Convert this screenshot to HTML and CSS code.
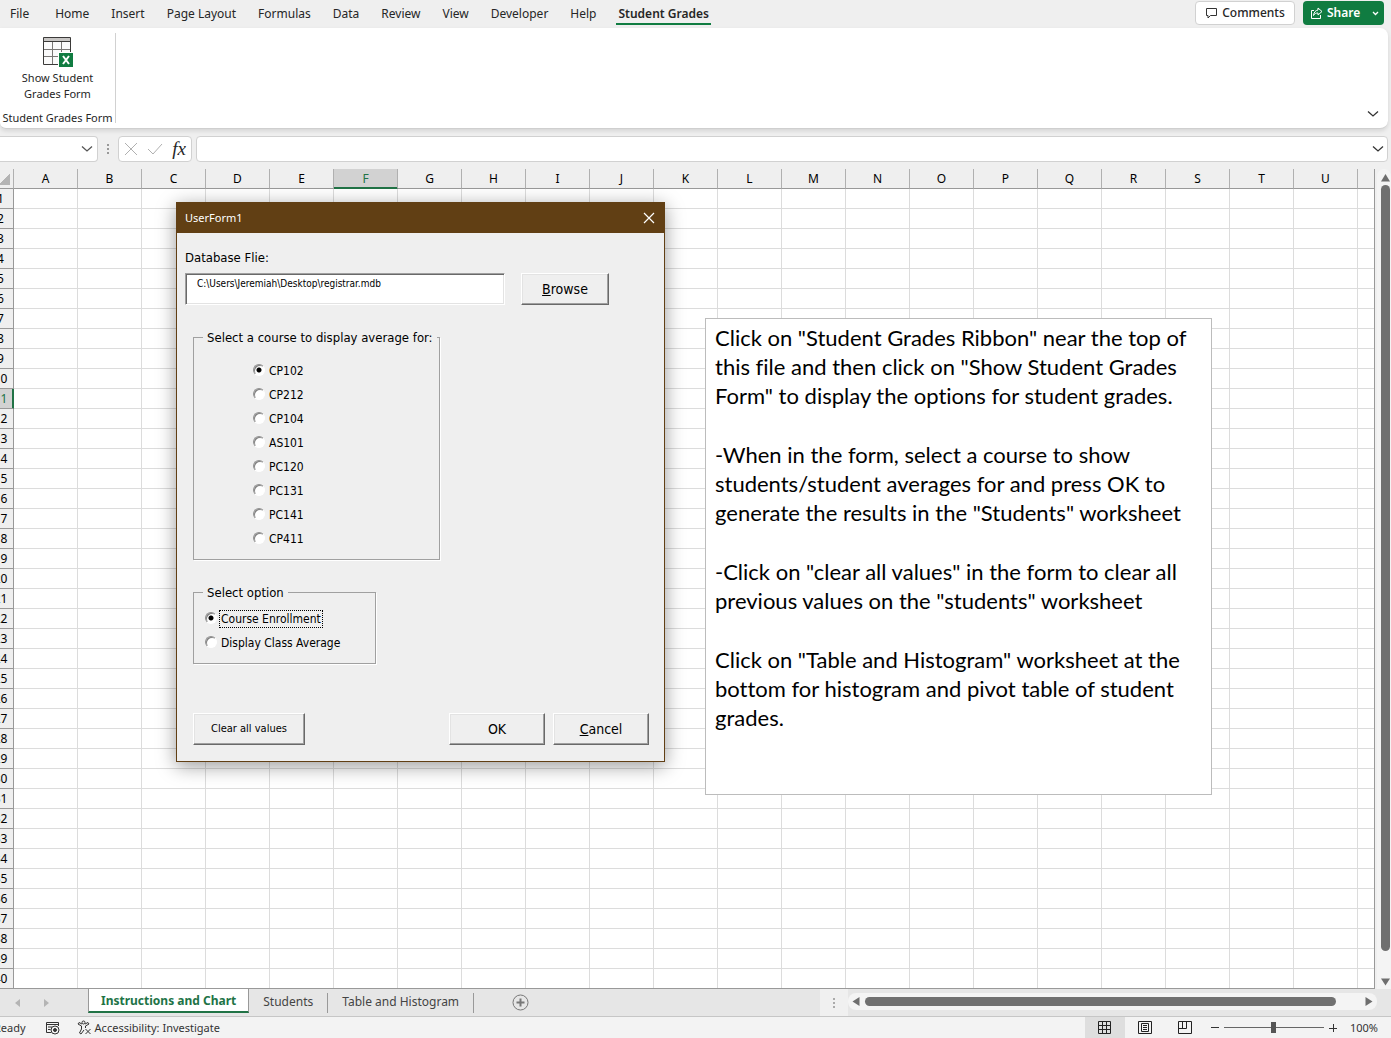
FILE: index.html
```html
<!DOCTYPE html>
<html lang="en">
<head>
<meta charset="utf-8">
<title>Student Grades</title>
<link rel="stylesheet" href="styles.css">
</head>
<body>
<header class="menu-bar">
  <nav class="menu">
    <a class="menu-item menu-file" href="#">File</a>
    <a class="menu-item" href="#">Home</a>
    <a class="menu-item" href="#">Insert</a>
    <a class="menu-item" href="#">Page Layout</a>
    <a class="menu-item" href="#">Formulas</a>
    <a class="menu-item" href="#">Data</a>
    <a class="menu-item" href="#">Review</a>
    <a class="menu-item" href="#">View</a>
    <a class="menu-item" href="#">Developer</a>
    <a class="menu-item" href="#">Help</a>
    <a class="menu-item is-active" href="#">Student Grades</a>
  </nav>
  <button class="top-button comments" type="button">
    <svg width="13" height="13" viewBox="0 0 13 13" fill="none" stroke="#333"><path d="M1.500 1.500h10v7h-6l-2.500 2.500v-2.500h-1.500z"/></svg>
    Comments
  </button>
  <button class="top-button share" type="button">
    <svg width="13" height="13" viewBox="0 0 13 13" fill="none" stroke="#fff"><path d="M4 3.500H1.500v8h9V8"/><path d="M8 1l4 3.500-4 3.500V6C6 6 4.500 6.500 3.500 8.500 4 5 5.500 3.500 8 3z"/></svg>
    <span>Share</span>
    <svg class="share-caret" width="7" height="5" viewBox="0 0 7 5" fill="none" stroke="#fff" stroke-width="1.300"><path d="M1 1l2.500 2.500L6 1"/></svg>
  </button>
</header>

<section class="ribbon">
  <div class="ribbon-group">
    <button class="ribbon-button" type="button">
      <svg width="32" height="32" viewBox="0 0 32 32"><path d="M2.500 2.500h27v27h-27z" fill="#fafafa"/><path d="M2.500 2.500h27v4h-27z" fill="#c8c6c4"/><path d="M11.500 7v22M20.500 7v22M3 14.500h26M3 21.500h26" stroke="#797775" fill="none"/><path d="M2.500 2.500h27v27h-27zM2.500 6.500h27" stroke="#3b3a39" fill="none"/><path d="M17 17h15v15H17z" fill="#fff"/><path d="M18 18h14v14H18z" fill="#107c41"/><path d="M22 21l6 8M28 21l-6 8" stroke="#fff" stroke-width="2"/></svg>
      <span>Show Student<br>Grades Form</span>
    </button>
    <div class="ribbon-label">Student Grades Form</div>
  </div>
  <button class="icon-button ribbon-collapse" type="button" aria-label="Collapse ribbon">
    <svg width="12" height="8" viewBox="0 0 12 8" fill="none" stroke="#333" stroke-width="1.300"><path d="M1 1.500l5 4.500 5-4.500"/></svg>
  </button>
</section>

<section class="formula-row">
  <button class="name-box" type="button" aria-label="Name box">
    <svg width="12" height="8" viewBox="0 0 12 8" fill="none" stroke="#555" stroke-width="1.300"><path d="M1 1.500l5 4.500 5-4.500"/></svg>
  </button>
  <svg width="4" height="12" viewBox="0 0 4 12" fill="#999"><path d="M1 1h2v2H1zM1 5h2v2H1zM1 9h2v2H1z"/></svg>
  <div class="formula-tools">
    <button class="icon-button" type="button" aria-label="Cancel entry"><svg width="14" height="14" viewBox="0 0 14 14" stroke="#b0b0b0"><path d="M1 1l12 12M13 1L1 13"/></svg></button>
    <button class="icon-button" type="button" aria-label="Enter"><svg width="16" height="14" viewBox="0 0 16 14" fill="none" stroke="#b0b0b0"><path d="M1 7l5 5L15 2"/></svg></button>
    <button class="icon-button fx" type="button">fx</button>
  </div>
  <div class="formula-box">
    <input class="formula-input" type="text" aria-label="Formula">
    <svg width="12" height="8" viewBox="0 0 12 8" fill="none" stroke="#333" stroke-width="1.300"><path d="M1 1.500l5 4.500 5-4.500"/></svg>
  </div>
</section>

<main class="workspace">
  <div class="sheet">
    <table class="grid" id="grid" aria-label="Worksheet"></table>
  </div>
  <div class="v-scroll">
    <svg width="9" height="8" viewBox="0 0 9 8" fill="#6e6e6e"><path d="M4.500 0L9 7.500H0z"/></svg>
    <div class="v-thumb"></div>
    <svg width="9" height="8" viewBox="0 0 9 8" fill="#6e6e6e"><path d="M4.500 7.500L9 .5H0z"/></svg>
  </div>

  <form class="dialog" onsubmit="return false">
    <div class="dialog-title">
      <span>UserForm1</span>
      <button class="icon-button" type="button" aria-label="Close"><svg width="12" height="12" viewBox="0 0 12 12" stroke="#fff" stroke-width="1.200"><path d="M1 1l10 10M11 1L1 11"/></svg></button>
    </div>
    <div class="dialog-body">
      <label class="file-label" for="db">Database Flie:</label>
      <div class="file-row">
        <input class="file-input" id="db" type="text" value="C:\Users\Jeremiah\Desktop\registrar.mdb">
        <button class="button browse" type="button"><u>B</u>rowse</button>
      </div>
      <fieldset class="frame courses">
        <legend>Select a course to display average for:</legend>
        <label class="option"><input type="radio" name="course" checked><span>CP102</span></label>
        <label class="option"><input type="radio" name="course"><span>CP212</span></label>
        <label class="option"><input type="radio" name="course"><span>CP104</span></label>
        <label class="option"><input type="radio" name="course"><span>AS101</span></label>
        <label class="option"><input type="radio" name="course"><span>PC120</span></label>
        <label class="option"><input type="radio" name="course"><span>PC131</span></label>
        <label class="option"><input type="radio" name="course"><span>PC141</span></label>
        <label class="option"><input type="radio" name="course"><span>CP411</span></label>
      </fieldset>
      <fieldset class="frame modes">
        <legend>Select option</legend>
        <label class="option"><input type="radio" name="mode" checked><span class="focused">Course Enrollment</span></label>
        <label class="option"><input type="radio" name="mode"><span>Display Class Average</span></label>
      </fieldset>
      <div class="actions">
        <button class="button clear" type="button">Clear all values</button>
        <button class="button action" type="submit">OK</button>
        <button class="button action" type="button"><u>C</u>ancel</button>
      </div>
    </div>
  </form>

  <div class="note">
    <p>Click on "Student Grades Ribbon" near the top of<br>this file and then click on "Show Student Grades<br>Form" to display the options for student grades.</p>
    <p>-When in the form, select a course to show<br>students/student averages for and press OK to<br>generate the results in the "Students" worksheet</p>
    <p>-Click on "clear all values" in the form to clear all<br>previous values on the "students" worksheet</p>
    <p>Click on "Table and Histogram" worksheet at the<br>bottom for histogram and pivot table of student<br>grades.</p>
  </div>
</main>

<div class="tab-bar">
  <div class="tab-nav">
    <svg width="5" height="8" viewBox="0 0 5 8" fill="#b4b4b4"><path d="M5 0v8L0 4z"/></svg>
    <svg width="5" height="8" viewBox="0 0 5 8" fill="#b4b4b4"><path d="M0 0v8l5-4z"/></svg>
  </div>
  <nav class="tabs">
    <a class="tab is-current" href="#">Instructions and Chart</a>
    <a class="tab" href="#">Students</a>
    <a class="tab" href="#">Table and Histogram</a>
  </nav>
  <button class="icon-button add-sheet" type="button" aria-label="New sheet"><svg width="17" height="17" viewBox="0 0 17 17" fill="none" stroke="#777"><circle cx="8.500" cy="8.500" r="7.500"/><path d="M8.500 4.500v8M4.500 8.500h8" stroke-width="2"/></svg></button>
  <div class="h-area">
    <div class="h-grip"><svg width="2" height="10" viewBox="0 0 2 10" fill="#aaa"><path d="M0 0h2v2H0zM0 4h2v2H0zM0 8h2v2H0z"/></svg></div>
    <div class="h-scroll">
      <svg width="8" height="9" viewBox="0 0 8 9" fill="#6e6e6e"><path d="M7.500 0v9L.5 4.500z"/></svg>
      <div class="h-thumb"></div>
      <svg width="8" height="9" viewBox="0 0 8 9" fill="#6e6e6e"><path d="M.5 0v9l7-4.500z"/></svg>
    </div>
  </div>
</div>

<footer class="status">
  <span class="ready">Ready</span>
  <svg class="macro" width="15" height="14" viewBox="0 0 15 14" fill="none" stroke="#333"><path d="M6 11.500H1.500v-10h12V5M1.500 3.500h12M3 6h4M3 8.500h2.500"/><circle cx="10" cy="9" r="4"/><circle cx="10" cy="9" r="1.500" fill="#333"/></svg>
  <button class="access" type="button">
    <svg width="15" height="15" viewBox="0 0 15 15" fill="none" stroke="#333"><circle cx="6.500" cy="2.500" r="1.500"/><path d="M5 4L2 2.500 1 4l3.500 2v3L2.500 13l1.500 1 3-4M8 4l3-1.500L12 4 8.500 6v2M8.500 9l5 5M13.500 9l-5 5"/></svg>
    Accessibility: Investigate
  </button>
  <div class="views">
    <button class="view is-on" type="button" aria-label="Normal"><svg width="13" height="13" viewBox="0 0 13 13" fill="none" stroke="#222"><path d="M.5.5h12v12H.5zM4.500.5v12M8.500.5v12M.5 4.500h12M.5 8.500h12"/></svg></button>
    <button class="view" type="button" aria-label="Page layout"><svg width="14" height="13" viewBox="0 0 14 13" fill="none" stroke="#222"><path d="M.5.5h13v12H.5zM3.500 2.500h7v8h-7zM5 4.500h4M5 6.500h4M5 8.500h4"/></svg></button>
    <button class="view" type="button" aria-label="Page break preview"><svg width="14" height="13" viewBox="0 0 14 13" fill="none" stroke="#222"><path d="M.5.5h13v12H.5zM.5 7.500h8v-7M4.500.5v7"/></svg></button>
  </div>
  <div class="zoom">
    <svg width="8" height="8" viewBox="0 0 8 8" stroke="#333"><path d="M0 3.500h8"/></svg>
    <input type="range" min="0" max="100" value="50" aria-label="Zoom">
    <svg width="8" height="8" viewBox="0 0 8 8" stroke="#333"><path d="M0 4.500h8M4.500 0v8"/></svg>
    <span class="zoom-value">100%</span>
  </div>
</footer>
<script src="grid.js"></script>
</body>
</html>
```
FILE: styles.css
```css
* { box-sizing: border-box; }

body {
  margin: 0;
  height: 100vh;
  display: flex;
  flex-direction: column;
  overflow: hidden;
  background: #efefef;
  color: #262626;
  font: 12px/16px "Noto Sans", "Open Sans", sans-serif;
}

button {
  margin: 0;
  padding: 0;
  border: 0;
  background: none;
  color: inherit;
  font: inherit;
}

a { color: inherit; text-decoration: none; }
svg { display: block; flex: none; }
.icon-button { display: flex; align-items: center; justify-content: center; }

/* Menu */
.menu-bar { display: flex; height: 28px; padding-right: 7px; }
.menu { flex: 1; display: flex; gap: 22px; padding-left: 10px; }
.menu-item { height: 25px; padding-top: 6px; white-space: nowrap; }
.menu-file { margin-right: 4px; }
.menu-item.is-active { margin-left: -2px; padding: 6px 2px 0; border-bottom: 2px solid #107c41; font-weight: 600; }
.top-button {
  display: flex;
  align-items: center;
  height: 24px;
  margin-top: 1px;
  border-radius: 4px;
  font-weight: 500;
}
.comments { gap: 4px; width: 100px; justify-content: center; border: 1px solid #d1d1d1; background: #fff; }
.share { gap: 4px; width: 81px; margin-left: 8px; padding: 0 5px 0 7px; background: #107c41; color: #fff; font-weight: 600; }
.share-caret { margin-left: auto; }

/* Ribbon */
.ribbon {
  display: flex;
  justify-content: space-between;
  align-items: flex-end;
  height: 101px;
  margin-right: 3px;
  padding: 5px 8px 5px 0;
  border-bottom: 1px solid #cfcfcf;
  border-radius: 0 8px 8px 6px;
  background: #fff;
  box-shadow: 0 2px 4px #0000001c;
}
.ribbon-group {
  display: flex;
  flex-direction: column;
  align-items: center;
  justify-content: space-between;
  width: 116px;
  height: 90px;
  padding-top: 2px;
  border-right: 1px solid #d1d1d1;
}
.ribbon-button { display: flex; flex-direction: column; align-items: center; gap: 3px; font-size: 11px; }
.ribbon-label { font-size: 11px; line-height: 10px; white-space: nowrap; }
.ribbon-collapse { width: 14px; height: 18px; }

/* Formula bar */
.formula-row { display: flex; align-items: center; height: 26px; margin: 7px 3px 7px 0; }
.name-box {
  display: flex;
  align-items: center;
  justify-content: flex-end;
  width: 98px;
  height: 26px;
  margin-right: 8px;
  padding-right: 4px;
  border: 1px solid #d1d1d1;
  border-left: 0;
  border-radius: 0 4px 4px 0;
  background: #fff;
}
.formula-tools {
  display: flex;
  align-items: center;
  justify-content: space-between;
  width: 74px;
  height: 26px;
  margin: 0 4px 0 8px;
  padding: 0 5px;
  border: 1px solid #d1d1d1;
  border-radius: 4px;
  background: #fff;
}
.fx { font: italic 19px/20px "Liberation Serif", serif; }
.formula-box {
  flex: 1;
  display: flex;
  align-items: center;
  height: 26px;
  padding-right: 3px;
  border: 1px solid #d1d1d1;
  border-radius: 4px;
  background: #fff;
}
.formula-input { flex: 1; border: 0; outline: 0; background: none; }

/* Worksheet */
.workspace { position: relative; flex: 1; display: flex; min-height: 0; }
.sheet { flex: 1; overflow: hidden; border-right: 1px solid #999; border-bottom: 1px solid #999; }
/* The row headings are scrolled partly past the left edge. */
.grid { width: 1434px; margin-left: -12px; table-layout: fixed; border-collapse: separate; border-spacing: 0; }
.grid th, .grid td { width: 64px; height: 20px; padding: 0; border-right: 1px solid #dcdcdc; border-bottom: 1px solid #dcdcdc; background: #fff; }
.grid th { background: #efefef; border-color: #999; color: #000; font-weight: 400; font-size: 12px; line-height: 18px; text-align: center; }
.grid th:first-child { width: 26px; padding-top: 1px; }
.grid thead th { border-right-color: #b0b0b0; }
.grid .corner { background: linear-gradient(135deg, #efefef 50%, #b4b4b4 50%) no-repeat 10px 4px / 12px 12px #efefef; }
.grid thead .is-active { background: #d2d2d2; color: #217346; box-shadow: inset 0 -1px #217346; border-bottom-color: #217346; }
.grid tbody .is-active { background: #d2d2d2; color: #217346; box-shadow: inset -1px 0 #217346; border-right-color: #217346; }

.v-scroll {
  display: flex;
  flex-direction: column;
  align-items: center;
  gap: 3px;
  width: 14px;
  margin-left: 2px;
  padding: 5px 0 3px 3px;
  border-radius: 7px 7px 0 0;
  background: #f4f4f4;
}
.v-thumb { width: 9px; flex: 1; margin-bottom: 24px; border-radius: 5px; background: #707070; }

/* User form */
.dialog {
  position: absolute;
  left: 176px;
  top: 33px;
  width: 489px;
  border: 1px solid #613f14;
  background: #efefef;
  box-shadow: 0 4px 18px #00000066;
  color: #000;
  font-family: "DejaVu Sans Condensed", "DejaVu Sans", sans-serif;
}
.dialog-title {
  display: flex;
  align-items: center;
  justify-content: space-between;
  height: 30px;
  padding: 0 9px 0 8px;
  background: #613f14;
  color: #fff;
  font-family: "Noto Sans", sans-serif;
  font-size: 11px;
}
.dialog-body { padding: 16px 15px 16px 8px; }
.file-label { display: block; font-size: 13px; line-height: 18px; }
.file-row { display: flex; gap: 16px; margin-top: 6px; }
.file-input {
  width: 320px;
  height: 32px;
  padding: 0 11px 12px;
  border: 1px solid;
  border-color: #a0a0a0 #fff #fff #a0a0a0;
  box-shadow: inset 1px 1px #696969, inset -1px -1px #e3e3e3;
  background: #fff;
  color: #000;
  font: 10px/18px "DejaVu Sans Condensed", "DejaVu Sans", sans-serif;
  outline: 0;
}
.button {
  height: 32px;
  border: 1px solid;
  border-color: #fff #696969 #696969 #fff;
  box-shadow: inset -1px -1px #a0a0a0, inset 1px 1px #e3e3e3;
  font-size: 14px;
}
.browse { width: 88px; }
.frame {
  min-width: 0;
  margin: 23px 0 0 8px;
  padding: 0 0 0 9px;
  border: 1px solid #a0a0a0;
  box-shadow: 1px 1px #fff;
}
.frame legend { padding: 2px 4px 0; font-size: 13px; line-height: 16px; }
.option { display: flex; align-items: center; gap: 3px; height: 24px; }
.option span { padding: 0 1px; }
.option .focused { outline: 1px dotted #000; }
.option input {
  appearance: none;
  width: 12px;
  height: 12px;
  margin: 0 0 2px;
  border: 1px solid;
  border-color: #909090 #fff #fff #909090;
  border-radius: 50%;
  box-shadow: inset 1px 1px #808080;
  background: #fff;
}
.option input:checked { background: radial-gradient(circle, #000 2px, #fff 3px); }
.courses { width: 247px; height: 232px; }
.courses .option { margin-left: 50px; }
.courses legend { margin-bottom: 13px; }
.modes { width: 183px; height: 81px; }
.modes .option { margin-left: 2px; }
.modes legend { margin-bottom: 6px; }
.actions { display: flex; gap: 8px; margin: 49px 0 0 8px; }
.clear { width: 112px; margin-right: auto; font-size: 11px; }
.action { width: 96px; }

/* Instruction text box */
.note {
  position: absolute;
  left: 705px;
  top: 149px;
  width: 507px;
  height: 477px;
  padding: 4px 9px;
  border: 1px solid #bcbcbc;
  background: #fff;
  color: #000;
  font: 22px/29px Lato, sans-serif;
  font-variant-ligatures: none;
  white-space: nowrap;
}
.note p { margin: 0 0 30px; }

/* Sheet tabs */
.tab-bar { display: flex; height: 28px; border-bottom: 1px solid #c6c6c6; background: #e6e6e6; color: #444; }
.tab-nav { display: flex; align-items: center; gap: 24px; width: 88px; padding-left: 15px; }
.tabs { display: flex; align-items: center; }
.tab { height: 20px; padding: 0 14px; border-right: 1px solid #999; white-space: nowrap; line-height: 18px; }
.tab.is-current {
  align-self: flex-start;
  height: 24px;
  padding: 3px 12px 0;
  border: solid #999;
  border-width: 0 1px;
  border-bottom: 2px solid #217346;
  background: #fff;
  color: #217346;
  font-weight: 700;
}
.add-sheet { margin-left: 38px; }
.h-area { display: flex; width: 571px; margin-left: auto; padding-right: 14px; }
.h-grip { display: flex; align-items: center; justify-content: center; width: 28px; background: #f0f0f0; }
.h-scroll { flex: 1; display: flex; align-items: center; gap: 5px; height: 17px; margin: 4px 0; padding: 0 4px; border-radius: 8px; background: #f4f4f4; }
.h-thumb { flex: 1; height: 9px; margin-right: 24px; border-radius: 5px; background: #707070; }

/* Status bar */
.status { display: flex; align-items: center; height: 21px; padding-right: 13px; background: #f3f3f3; font-size: 11px; line-height: 14px; color: #333; }
.ready { margin-left: -6px; }
.macro { margin-left: 19px; }
.access { display: flex; align-items: center; gap: 3px; margin-left: 17px; }
.views { display: flex; align-self: stretch; margin-left: auto; }
.view { display: flex; align-items: center; justify-content: center; width: 40px; }
.view.is-on { background: #dedede; }
.zoom { display: flex; align-items: center; gap: 5px; margin-left: 6px; }
.zoom input { appearance: none; width: 100px; height: 12px; margin: 0; background: linear-gradient(#666, #666) no-repeat center / 100% 1px; }
.zoom input::-webkit-slider-thumb { appearance: none; width: 5px; height: 11px; background: #555; }
.zoom-value { margin-left: 8px; }
```
FILE: grid.js
```js
// Builds the empty worksheet: column headings A to U, forty numbered rows.
// The last column is only partly in view and carries no heading.
const columns = [..."ABCDEFGHIJKLMNOPQRSTU", ""];
const rowCount = 40;
const activeColumn = "F";
const activeRow = 11;

const heads = columns
  .map((c) => `<th scope="col"${c === activeColumn ? ' class="is-active"' : ""}>${c}</th>`)
  .join("");

let rows = "";
for (let r = 1; r <= rowCount; r++) {
  rows += `<tr><th scope="row"${r === activeRow ? ' class="is-active"' : ""}>${r}</th>${"<td></td>".repeat(columns.length)}</tr>`;
}

document.getElementById("grid").innerHTML =
  `<thead><tr><th class="corner"></th>${heads}</tr></thead><tbody>${rows}</tbody>`;
```
